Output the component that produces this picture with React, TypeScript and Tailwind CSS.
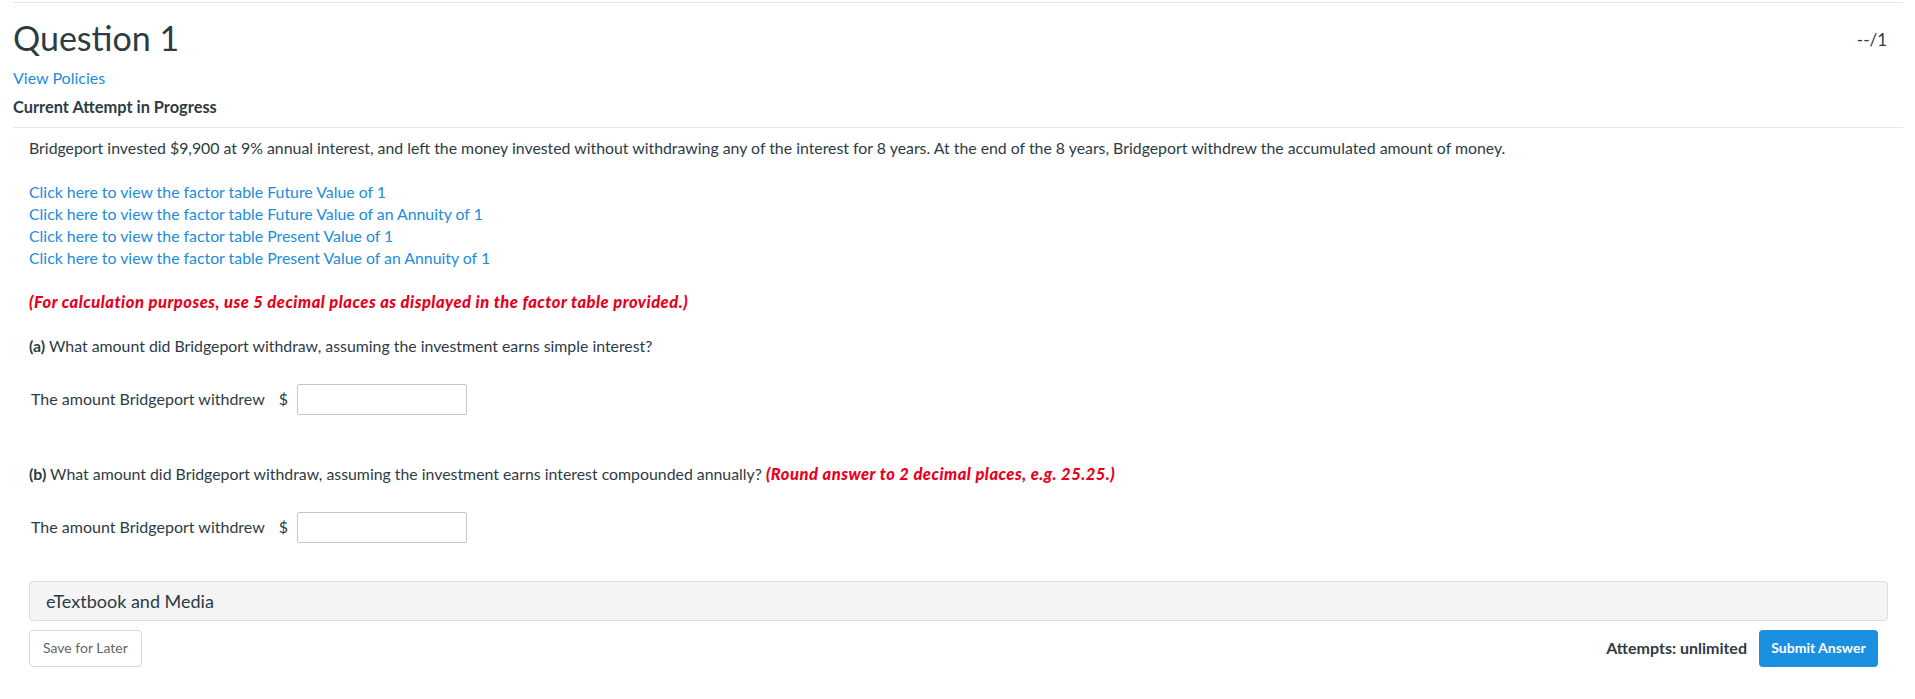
import React from "react";

const links = [
  "Click here to view the factor table Future Value of 1",
  "Click here to view the factor table Future Value of an Annuity of 1",
  "Click here to view the factor table Present Value of 1",
  "Click here to view the factor table Present Value of an Annuity of 1",
];

function AmountRow() {
  return (
    <div className="flex items-center h-[31px] pl-[2px]">
      <span className="text-[16px] leading-[22px]">The amount Bridgeport withdrew</span>
      <span className="ml-[14px] text-[16px] leading-[22px]">$</span>
      <input
        type="text"
        className="ml-[9px] w-[170px] h-[31px] border border-[#c8c8c8] rounded-[2px] bg-white outline-none px-2"
      />
    </div>
  );
}

export default function App() {
  return (
    <div
      className="w-full min-h-[699px] bg-white text-[#2d3b45]"
      style={{ fontFamily: "Lato, 'Open Sans', sans-serif" }}
    >
      <div className="ml-[13px] mr-[12px] pt-[2px]">
        <div className="border-t border-[#e6e6e6]">
          <div className="flex justify-between items-start">
            <h1 className="mt-[15px] text-[34px] leading-[1.2] font-normal">Question 1</h1>
            <div className="mt-[26px] mr-[16px] text-[17px] leading-[22px]">--/1</div>
          </div>
          <div className="mt-[8px] text-[16px] leading-[22px]">
            <a className="text-[#1b8ddb] cursor-pointer">View Policies</a>
          </div>
          <div className="mt-[7px] text-[16.4px] leading-[22px] font-bold">Current Attempt in Progress</div>
          <div className="mt-[9px] border-b border-[#e6e6e6]" />
        </div>

        <div className="pl-[16px] pr-[15px] text-[15.85px] leading-[22px]">
          <p className="mt-[9px]">
            Bridgeport invested $9,900 at 9% annual interest, and left the money invested without withdrawing any of the interest for 8 years. At the end of the 8 years, Bridgeport withdrew the accumulated amount of money.
          </p>
          <div className="mt-[22px] flex flex-col">
            {links.map((l) => (
              <a key={l} className="text-[#1b8ddb] cursor-pointer w-fit">
                {l}
              </a>
            ))}
          </div>
          <p className="mt-[22px] text-[16.5px] tracking-[0.5px] font-black italic text-[#e8001c]">
            (For calculation purposes, use 5 decimal places as displayed in the factor table provided.)
          </p>
          <p className="mt-[22px]">
            <span className="font-bold">(a)</span> What amount did Bridgeport withdraw, assuming the investment earns simple interest?
          </p>
          <div className="mt-[27px]">
            <AmountRow />
          </div>
          <p className="mt-[48px]">
            <span className="font-bold">(b)</span> What amount did Bridgeport withdraw, assuming the investment earns interest compounded annually?{" "}
            <span className="text-[16.5px] tracking-[0.5px] font-black italic text-[#e8001c]">(Round answer to 2 decimal places, e.g. 25.25.)</span>
          </p>
          <div className="mt-[27px]">
            <AmountRow />
          </div>

          <div className="mt-[38px] h-[40px] flex items-center bg-[#f4f4f4] border border-[#dcdcdc] rounded-[4px] pl-[16px]">
            <span className="text-[18px] leading-[24px]">eTextbook and Media</span>
          </div>

          <div className="mt-[9px] flex items-center justify-between pr-[10px]">
            <button className="h-[37px] px-[13px] bg-white border border-[#d9d9d9] rounded-[4px] text-[14px] text-[#666666]">
              Save for Later
            </button>
            <div className="flex items-center gap-[12px]">
              <span className="text-[16px] font-bold">Attempts: unlimited</span>
              <button className="h-[37px] w-[119px] bg-[#1b8fe0] rounded-[4px] text-[14px] font-bold text-white">
                Submit Answer
              </button>
            </div>
          </div>
        </div>
      </div>
    </div>
  );
}
